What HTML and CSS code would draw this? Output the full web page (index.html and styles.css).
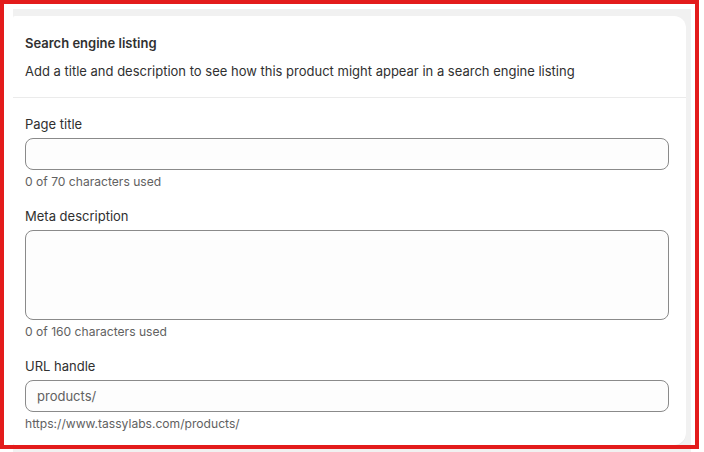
FILE: index.html
```html
<!DOCTYPE html>
<html lang="en">
<head>
<meta charset="utf-8">
<title>Search engine listing</title>
<link rel="stylesheet" href="styles.css">
</head>
<body>
<div class="page">
  <div class="panel">
    <section class="card">
      <header class="card-head">
        <h2 class="card-title">Search engine listing</h2>
        <p class="card-desc">Add a title and description to see how this product might appear in a search engine listing</p>
      </header>
      <div class="card-body">
        <div class="field">
          <label class="label" for="pt">Page title</label>
          <input class="input" id="pt" type="text">
          <div class="help">0 of 70 characters used</div>
        </div>
        <div class="field">
          <label class="label" for="md">Meta description</label>
          <textarea class="input textarea" id="md"></textarea>
          <div class="help">0 of 160 characters used</div>
        </div>
        <div class="field">
          <label class="label" for="uh">URL handle</label>
          <input class="input" id="uh" type="text" placeholder="products/">
          <div class="help">https://www.tassylabs.com/products/</div>
        </div>
      </div>
    </section>
  </div>
</div>
<div class="annotation"></div>
</body>
</html>
```

FILE: styles.css
```css
* { box-sizing: border-box; }
html, body { margin: 0; padding: 0; background: #ffffff; }
body {
  font-family: Inter, "Noto Sans", "Liberation Sans", sans-serif;
  color: #303030;
  width: 704px;
  height: 452px;
  overflow: hidden;
  position: relative;
}
.page {
  padding: 9px 13px 0 13px;
}
.panel {
  background: #f1f1f1;
  width: 678px;
  height: 443px;
  padding-top: 7px;
}
.card {
  background: #ffffff;
  width: 673px;
  height: 429px;
  border-radius: 2px 12px 12px 2px;
  box-shadow: 0 1px 0 rgba(0,0,0,0.04);
}
.card-head {
  padding: 17px 12px 16px 12px;
  border-bottom: 1px solid #ebebeb;
}
.card-title {
  margin: 0;
  font-size: 13px;
  line-height: 20px;
  font-weight: 600;
  color: #303030;
}
.card-desc {
  margin: 8px 0 0 0;
  font-size: 13px;
  line-height: 20px;
  font-weight: 400;
  color: #303030;
}
.card-body {
  padding: 16px 17px 0 12px;
  display: flex;
  flex-direction: column;
  gap: 16px;
}
.field {
  display: flex;
  flex-direction: column;
}
.label {
  font-size: 13px;
  line-height: 20px;
  color: #303030;
  margin-bottom: 4px;
}
.input {
  display: block;
  width: 644px;
  height: 32px;
  border: 1px solid #8a8a8a;
  border-radius: 8px;
  background: #fdfdfd;
  font-family: inherit;
  font-size: 13px;
  color: #303030;
  padding: 0 11px;
  margin: 0;
  outline: none;
}
.input::placeholder { color: #616161; opacity: 1; }
.textarea {
  height: 90px;
  resize: none;
}
.help {
  font-size: 12.1px;
  line-height: 16px;
  color: #616161;
  margin-top: 4px;
}
.annotation {
  position: absolute;
  left: 0;
  top: 0;
  width: 699px;
  height: 449px;
  border: 4.5px solid #e31b1b;
  pointer-events: none;
}
```
